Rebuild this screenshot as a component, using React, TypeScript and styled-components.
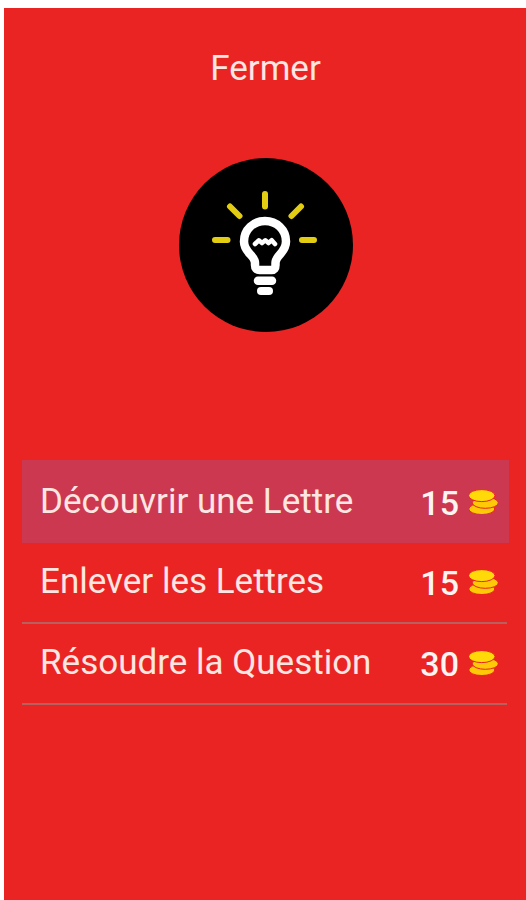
import React from "react";
import styled, { createGlobalStyle } from "styled-components";

const GlobalStyle = createGlobalStyle`
  * { box-sizing: border-box; }
  body { margin: 0; background: #ffffff; }
`;

const Page = styled.main`
  min-height: 100vh;
  padding: 8px 0 0 4px;
  display: flex;
  flex-direction: column;
`;

const Panel = styled.section`
  flex: 1;
  display: flex;
  flex-direction: column;
  align-items: center;
  padding: 35px 17px 48px 18px;
  background: #e92422;
  color: #ffe6e2;
  font-family: Roboto, sans-serif;
`;

const CloseButton = styled.button`
  border: 0;
  padding: 4px 8px;
  background: none;
  color: inherit;
  font: inherit;
  font-size: 35px;
  line-height: 44px;
  cursor: pointer;
`;

const Badge = styled.div`
  margin-top: 63px;
  width: 174px;
  height: 174px;
  border-radius: 50%;
  background: #000000;
`;

const HintList = styled.ul`
  align-self: stretch;
  list-style: none;
  margin: 128px 0 0;
  padding: 0;
`;

const HintItem = styled.li<{ $selected?: boolean }>`
  margin-right: ${(p) => (p.$selected ? "0" : "2px")};
  background: ${(p) => (p.$selected ? "#cc384f" : "transparent")};
  border-bottom: ${(p) => (p.$selected ? "0" : "2px solid #b8605e")};
`;

const HintButton = styled.button<{ $selected?: boolean }>`
  width: 100%;
  display: flex;
  align-items: center;
  border: 0;
  padding: ${(p) => (p.$selected ? "20px 11px 19px 18px" : "17px 9px 18px 18px")};
  background: none;
  color: inherit;
  font: inherit;
  font-size: 35px;
  line-height: 42px;
  text-align: left;
  cursor: pointer;
`;

const Label = styled.span`
  flex: 1;
`;

const Cost = styled.span`
  display: flex;
  align-items: center;
  gap: 10px;
  padding-top: 2px;
  color: #fff4f2;
  font-size: 34px;
  font-weight: 500;
`;

const CoinIcon = styled.svg`
  width: 29px;
  height: 24px;
  margin-bottom: 2px;
`;

const Coins = () => (
  <CoinIcon viewBox="0 0 29 24" aria-hidden="true">
    <g fill="#ffc908" stroke="#e92422" strokeWidth="1">
      <ellipse cx="12.800" cy="19" rx="13" ry="5.500" />
      <ellipse cx="16.300" cy="12.800" rx="13" ry="5.500" />
      <ellipse cx="12.800" cy="5.600" rx="13.200" ry="6" fill="#ffda08" />
    </g>
  </CoinIcon>
);

const Bulb = () => (
  <svg viewBox="0 0 174 174" width="174" height="174" fill="none" strokeLinecap="round" strokeLinejoin="round" aria-hidden="true">
    <g stroke="#e2cd12" strokeWidth="6">
      <path d="M86 36V48.500M36 82H48.500M123 82H135" />
      <path d="M51 48.500L60.500 58M122 48.500L112.500 58" />
    </g>
    <g stroke="#ffffff">
      <path d="M76 107V105C76 97 65 95 65 83.500C65 71.500 74.500 63 86 63C97.500 63 107 71.500 107 83.500C107 95 96.500 97 96.500 105V107Q96.500 112 92.500 112H80.500Q76 112 76 107Z" strokeWidth="8.500" />
      <path d="M79 122.700H93" strokeWidth="8.500" />
      <path d="M82 133H90" strokeWidth="8" />
      <path d="M76 86L79.800 82.300L83 85L86.300 82.300L89.500 85L92.700 82.300L96 86" strokeWidth="4.600" />
    </g>
  </svg>
);

const hints = [
  { label: "Découvrir une Lettre", cost: 15, selected: true },
  { label: "Enlever les Lettres", cost: 15 },
  { label: "Résoudre la Question", cost: 30 },
];

export default function App() {
  return (
    <>
      <GlobalStyle />
      <Page>
        <Panel>
          <CloseButton type="button">Fermer</CloseButton>
          <Badge>
            <Bulb />
          </Badge>
          <HintList>
            {hints.map((hint) => (
              <HintItem key={hint.label} $selected={hint.selected}>
                <HintButton type="button" $selected={hint.selected}>
                  <Label>{hint.label}</Label>
                  <Cost>
                    {hint.cost}
                    <Coins />
                  </Cost>
                </HintButton>
              </HintItem>
            ))}
          </HintList>
        </Panel>
      </Page>
    </>
  );
}
